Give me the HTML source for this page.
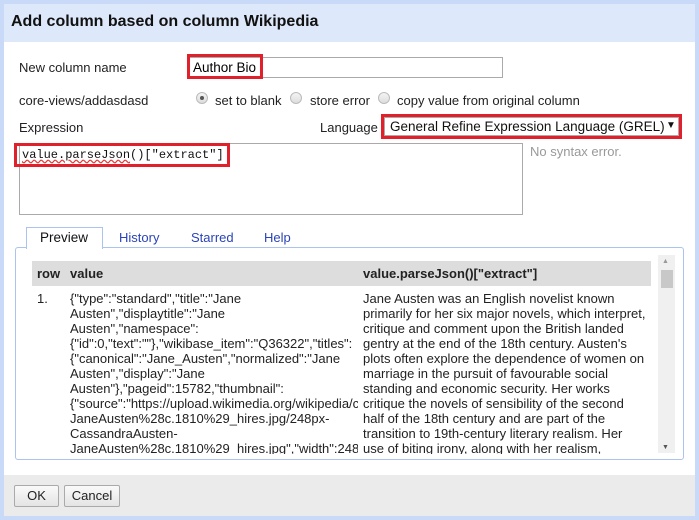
<!DOCTYPE html>
<html><head><meta charset="utf-8"><style>
*{box-sizing:border-box;margin:0;padding:0}
body{width:699px;height:520px;background:#c9daf8;font-family:"Liberation Sans",Arial,sans-serif;font-size:13px;color:#222;position:relative;overflow:hidden}
.a{position:absolute;white-space:nowrap}
#dlg{position:absolute;left:4px;top:4px;width:691px;height:512px;background:#fff}
.red{position:absolute;border:3px solid #e0202a}
.radio{position:absolute;width:12px;height:12px;border-radius:50%;border:1px solid #bbb;background:linear-gradient(#f4f4f4,#ddd)}
.t{position:absolute;font-size:13px;line-height:15px;white-space:nowrap}
</style></head><body>
<div id="dlg"></div>
<div class="a" style="left:4px;top:4px;width:691px;height:38px;background:#dde8fa"></div>
<div class="a" style="left:11px;top:13px;font-size:16px;font-weight:bold;color:#111">Add column based on column Wikipedia</div>

<div class="a" style="left:19px;top:60px">New column name</div>
<div class="a" style="left:189px;top:57px;width:314px;height:21px;border:1px solid #aaa"></div>
<div class="red" style="left:187px;top:54px;width:76px;height:25px"></div>
<div class="a" style="left:193px;top:60px;font-size:13.5px;color:#000">Author Bio</div>

<div class="a" style="left:19px;top:93px">core-views/addasdasd</div>
<div class="radio" style="left:196px;top:92px"><div style="position:absolute;left:3px;top:3px;width:4px;height:4px;border-radius:50%;background:#555"></div></div>
<div class="a" style="left:215px;top:93px">set to blank</div>
<div class="radio" style="left:290px;top:92px"></div>
<div class="a" style="left:310px;top:93px">store error</div>
<div class="radio" style="left:378px;top:92px"></div>
<div class="a" style="left:397px;top:93px">copy value from original column</div>

<div class="a" style="left:19px;top:120px">Expression</div>
<div class="a" style="left:320px;top:120px">Language</div>
<div class="red" style="left:381px;top:114px;width:301px;height:25px"></div>
<div class="a" style="left:384px;top:117px;width:295px;height:19px;border:1px solid #aaa;background:#fff"></div>
<div class="a" style="left:390px;top:119px;font-size:13.5px;color:#111">General Refine Expression Language (GREL)</div>
<div class="a" style="left:666px;top:120px;font-size:10px;color:#111">▼</div>

<div class="a" style="left:19px;top:143px;width:504px;height:72px;border:1px solid #aaa"></div>
<div class="red" style="left:14px;top:143px;width:216px;height:24px"></div>
<div class="a" style="left:22px;top:148px;font-family:'Liberation Mono',monospace;font-size:12px;color:#111"><span style="text-decoration:underline wavy #e33">value.parseJson</span>()["extract"]</div>
<div class="a" style="left:530px;top:144px;color:#999">No syntax error.</div>

<div class="a" style="left:15px;top:247px;width:669px;height:213px;border:1px solid #aac4ee;border-radius:3px"></div>
<div class="a" style="left:26px;top:227px;width:77px;height:22px;border:1px solid #aac4ee;border-bottom:none;background:#fff"></div>
<div class="a" style="left:40px;top:230px;font-size:13.5px;color:#111">Preview</div>
<div class="a" style="left:119px;top:230px;color:#2a44b8">History</div>
<div class="a" style="left:191px;top:230px;color:#2a44b8">Starred</div>
<div class="a" style="left:264px;top:230px;color:#2a44b8">Help</div>

<div class="a" style="left:32px;top:261px;width:619px;height:25px;background:#ddd"></div>
<div class="a" style="left:37px;top:266px;font-weight:bold">row</div>
<div class="a" style="left:70px;top:266px;font-weight:bold">value</div>
<div class="a" style="left:363px;top:266px;font-weight:bold">value.parseJson()["extract"]</div>
<div class="a" style="left:658px;top:255px;width:17px;height:198px;background:#f0f0f0"></div>
<div class="a" style="left:661px;top:270px;width:12px;height:18px;background:#c8c8c8"></div>
<div class="a" style="left:662px;top:258px;font-size:7px;color:#999">▲</div>
<div class="a" style="left:662px;top:444px;font-size:7px;color:#555">▼</div>

<div style="position:absolute;left:30px;top:291px;width:628px;height:163px;overflow:hidden">
<div class="t" style="left:7px;top:0">1.</div>
<div class="t" style="left:40px;top:0;width:288px;overflow:hidden">{"type":"standard","title":"Jane<br>Austen","displaytitle":"Jane<br>Austen","namespace":<br>{"id":0,"text":""},"wikibase_item":"Q36322","titles":<br>{"canonical":"Jane_Austen","normalized":"Jane<br>Austen","display":"Jane<br>Austen"},"pageid":15782,"thumbnail":<br>{"source":"https://upload.wikimedia.org/wikipedia/commons/<br>JaneAusten%28c.1810%29_hires.jpg/248px-<br>CassandraAusten-<br>JaneAusten%28c.1810%29_hires.jpg","width":248</div>
<div class="t" style="left:333px;top:0">Jane Austen was an English novelist known<br>primarily for her six major novels, which interpret,<br>critique and comment upon the British landed<br>gentry at the end of the 18th century. Austen's<br>plots often explore the dependence of women on<br>marriage in the pursuit of favourable social<br>standing and economic security. Her works<br>critique the novels of sensibility of the second<br>half of the 18th century and are part of the<br>transition to 19th-century literary realism. Her<br>use of biting irony, along with her realism,</div>
</div>

<div class="a" style="left:4px;top:475px;width:691px;height:41px;background:#ebebeb"></div>
<div class="a" style="left:14px;top:485px;width:45px;height:22px;border:1px solid #aaa;border-radius:2px;background:linear-gradient(#fafafa,#e4e4e4);text-align:center;line-height:20px">OK</div>
<div class="a" style="left:64px;top:485px;width:56px;height:22px;border:1px solid #aaa;border-radius:2px;background:linear-gradient(#fafafa,#e4e4e4);text-align:center;line-height:20px">Cancel</div>
</body></html>
